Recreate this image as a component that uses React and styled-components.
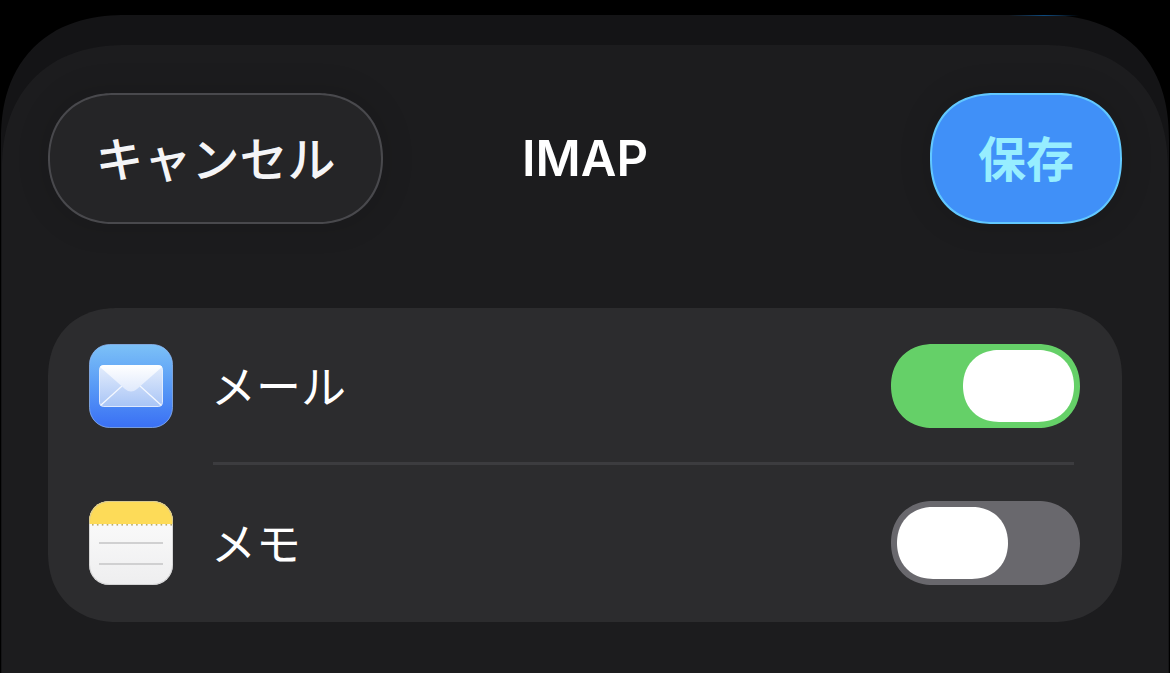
import React from "react";
import styled, { createGlobalStyle } from "styled-components";

const GlobalStyle = createGlobalStyle`
  html, body {
    margin: 0;
    height: 100%;
    background: #000;
    overflow: hidden;
  }
  body {
    font-family: "Noto Sans CJK JP", "Inter", sans-serif;
  }
`;

const Page = styled.div`
  width: 1170px;
  height: 673px;
  padding: 15px 1px 0;
  box-sizing: border-box;
  overflow: hidden;
`;

const BackSheet = styled.div`
  position: relative;
  height: 658px;
  padding: 30px 1px 0;
  box-sizing: border-box;
  background: #141416;
  border-radius: 125px 125px 0 0;
  corner-shape: superellipse(1.2);
`;

const TopGlint = styled.div`
  position: absolute;
  top: 0;
  right: 90px;
  width: 70px;
  height: 1px;
  background: linear-gradient(90deg, transparent, #0c4a80 50%, transparent);
`;

const Sheet = styled.div`
  height: 628px;
  padding: 48px 46px 0;
  box-sizing: border-box;
  background: #1c1c1e;
  border-radius: 125px 125px 0 0;
  corner-shape: superellipse(1.2);
`;

const Header = styled.header`
  display: grid;
  grid-template-columns: 1fr auto 1fr;
  align-items: center;
  height: 131px;
`;

const Title = styled.h1`
  margin: 0;
  font-family: "Inter", "Liberation Sans", sans-serif;
  font-size: 49px;
  font-weight: 600;
  line-height: 1;
  color: #fff;
`;

const PillButton = styled.button`
  height: 131px;
  width: ${(p) => p.$width}px;
  justify-self: ${(p) => p.$align};
  padding: 0 0 6px;
  box-sizing: border-box;
  border: 2px solid ${(p) => (p.$primary ? "#62c8ff" : "#49494d")};
  border-radius: 65.5px;
  corner-shape: superellipse(${(p) => (p.$primary ? 1.2 : 1.1)});
  background: ${(p) => (p.$primary ? "#4090f8" : "#252527")};
  box-shadow: 0 0 26px 10px rgba(0, 0, 0, 0.07);
  color: ${(p) => (p.$primary ? "#97eeff" : "#f5f5f7")};
  font-family: "Noto Sans CJK JP", sans-serif;
  font-size: 48px;
  font-weight: ${(p) => (p.$primary ? 700 : 500)};
  line-height: 1;
`;

const Panel = styled.section`
  margin-top: 84px;
  height: 314px;
  padding: 36px 42px 0 41px;
  box-sizing: border-box;
  background: #2c2c2e;
  border-radius: 70px;
  corner-shape: superellipse(1.15);
`;

const Row = styled.div`
  display: flex;
  align-items: center;
  height: 84px;
`;

const RowLabel = styled.span`
  flex: 1;
  margin: 0 0 4px 38px;
  font-size: 45px;
  line-height: 1;
  color: #fff;
`;

const Divider = styled.div`
  height: 3px;
  margin: 34px 6px 36px 124px;
  background: #3c3c3f;
`;

const Track = styled.div`
  display: flex;
  justify-content: ${(p) => (p.$on ? "flex-end" : "flex-start")};
  width: 189px;
  height: 84px;
  padding: 6px;
  box-sizing: border-box;
  border-radius: 42px;
  corner-shape: superellipse(1.1);
  background: ${(p) => (p.$on ? "#65d068" : "#69686d")};
`;

const Thumb = styled.div`
  width: 111px;
  height: 72px;
  border-radius: 36px;
  corner-shape: superellipse(1.1);
  background: #fff;
`;

function MailIcon() {
  return (
    <svg width="84" height="84" viewBox="0 0 84 84">
      <defs>
        <linearGradient id="mailBg" x1="0" y1="0" x2="0" y2="1">
          <stop offset="0" stopColor="#7cc1f7" />
          <stop offset="0.55" stopColor="#5596f6" />
          <stop offset="1" stopColor="#3a70f4" />
        </linearGradient>
        <linearGradient id="mailBody" x1="0" y1="0" x2="0" y2="1">
          <stop offset="0" stopColor="#e4edfc" />
          <stop offset="1" stopColor="#a9c5f6" />
        </linearGradient>
        <linearGradient id="mailFlap" x1="0" y1="0" x2="0" y2="1">
          <stop offset="0" stopColor="#ffffff" />
          <stop offset="1" stopColor="#dfe9fc" />
        </linearGradient>
      </defs>
      <rect x="0.5" y="0.5" width="83" height="83" rx="20" fill="url(#mailBg)" stroke="#93bcfb" strokeOpacity="0.7" />
      <rect x="10.5" y="21.5" width="63" height="41" rx="4" fill="url(#mailBody)" stroke="#f0f5ff" strokeOpacity="0.85" />
      <path d="M12 61 L33 42 M72 61 L51 42" stroke="#f4f8ff" strokeWidth="1.3" fill="none" />
      <path d="M11 23 Q12 21 15 21 H69 Q72 21 73 23 L48 45 Q42 50 36 45 Z" fill="url(#mailFlap)" />
    </svg>
  );
}

function NotesIcon() {
  const dots = Array.from({ length: 17 }, (_, i) => 3 + i * 4.9);
  return (
    <svg width="84" height="84" viewBox="0 0 84 84">
      <defs>
        <linearGradient id="noteBg" x1="0" y1="0" x2="0" y2="1">
          <stop offset="0" stopColor="#fdfdfd" />
          <stop offset="1" stopColor="#eeeeef" />
        </linearGradient>
        <clipPath id="noteClip">
          <rect width="84" height="84" rx="20" />
        </clipPath>
      </defs>
      <g clipPath="url(#noteClip)">
        <rect width="84" height="84" fill="url(#noteBg)" />
        <rect width="84" height="23" fill="#fddb58" />
        {dots.map((x) => (
          <rect key={x} x={x} y="23" width="1.6" height="1.6" fill="#b9ab6a" />
        ))}
        <rect x="10" y="41" width="64" height="2" fill="#d0d0d1" />
        <rect x="10" y="62" width="64" height="2" fill="#d0d0d1" />
      </g>
      <rect x="0.5" y="0.5" width="83" height="83" rx="20" fill="none" stroke="#bdbdbe" strokeOpacity="0.55" />
    </svg>
  );
}

export default function App() {
  return (
    <Page>
      <GlobalStyle />
      <BackSheet>
        <TopGlint />
        <Sheet>
          <Header>
            <PillButton $width={335} $align="start">キャンセル</PillButton>
            <Title>IMAP</Title>
            <PillButton $width={192} $align="end" $primary>保存</PillButton>
          </Header>
          <Panel>
            <Row>
              <MailIcon />
              <RowLabel>メール</RowLabel>
              <Track $on><Thumb /></Track>
            </Row>
            <Divider />
            <Row>
              <NotesIcon />
              <RowLabel>メモ</RowLabel>
              <Track><Thumb /></Track>
            </Row>
          </Panel>
        </Sheet>
      </BackSheet>
    </Page>
  );
}
